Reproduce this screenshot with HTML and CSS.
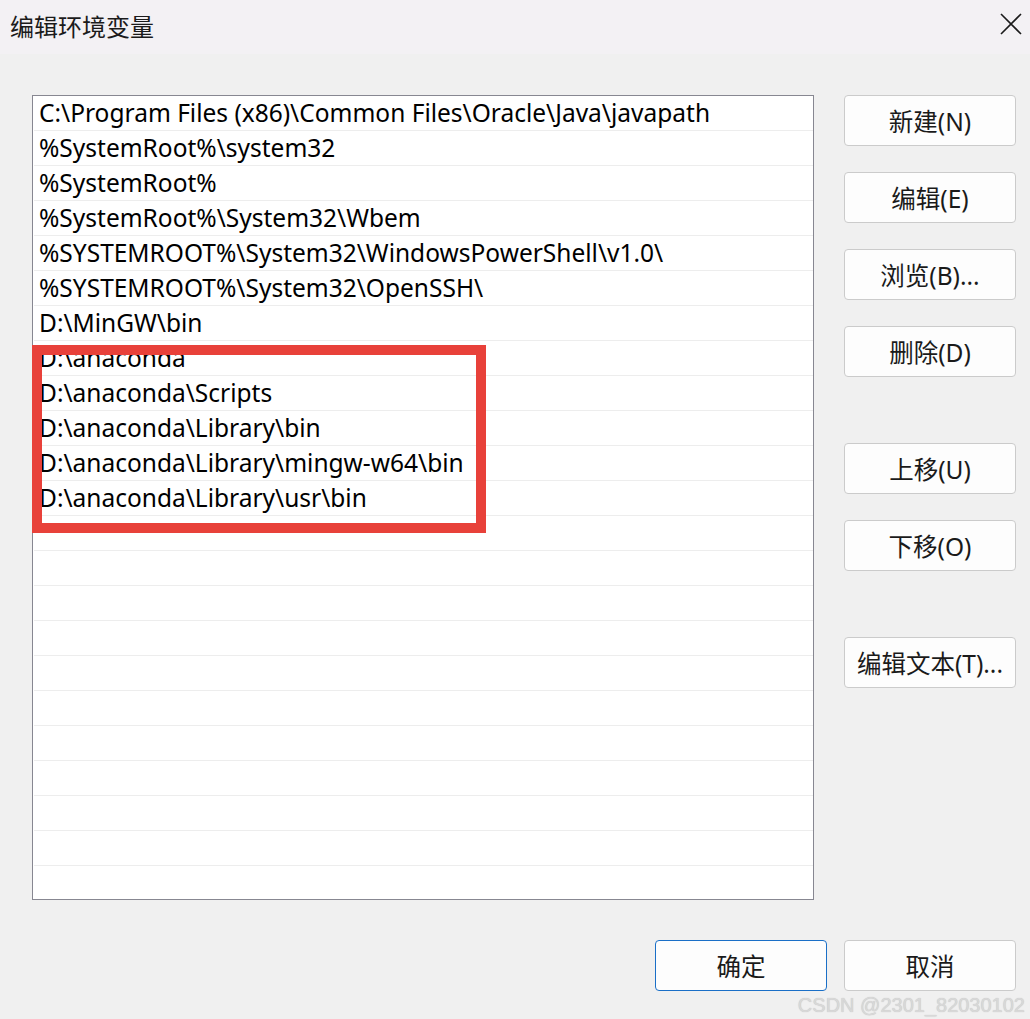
FILE: index.html
```html
<!DOCTYPE html>
<html lang="zh-CN">
<head>
    <meta charset="UTF-8">
    <title>编辑环境变量</title>
    <link rel="stylesheet" href="styles.css">
</head>
<body>
    <div class="window">
        <div class="title-bar">
            <span class="title">编辑环境变量</span>
            <svg class="close" width="22" height="22" viewBox="0 0 22 22">
                <path d="M1 1 L21 21 M21 1 L1 21" stroke="#1a1a1a" stroke-width="1.6" fill="none"/>
            </svg>
        </div>

        <div class="content">
            <div class="main-row">
                <div class="path-list">
                    <div class="row">C:\Program Files (x86)\Common Files\Oracle\Java\javapath</div>
                    <div class="row">%SystemRoot%\system32</div>
                    <div class="row">%SystemRoot%</div>
                    <div class="row">%SystemRoot%\System32\Wbem</div>
                    <div class="row">%SYSTEMROOT%\System32\WindowsPowerShell\v1.0\</div>
                    <div class="row">%SYSTEMROOT%\System32\OpenSSH\</div>
                    <div class="row">D:\MinGW\bin</div>
                    <div class="row">D:\anaconda</div>
                    <div class="row">D:\anaconda\Scripts</div>
                    <div class="row">D:\anaconda\Library\bin</div>
                    <div class="row">D:\anaconda\Library\mingw-w64\bin</div>
                    <div class="row">D:\anaconda\Library\usr\bin</div>
                    <div class="row"></div>
                    <div class="row"></div>
                    <div class="row"></div>
                    <div class="row"></div>
                    <div class="row"></div>
                    <div class="row"></div>
                    <div class="row"></div>
                    <div class="row"></div>
                    <div class="row"></div>
                    <div class="row"></div>
                    <div class="row last"></div>
                    <div class="highlight"></div>
                </div>

                <div class="side-buttons">
                    <button class="btn">新建(N)</button>
                    <button class="btn">编辑(E)</button>
                    <button class="btn">浏览(B)...</button>
                    <button class="btn">删除(D)</button>
                    <button class="btn group-start">上移(U)</button>
                    <button class="btn">下移(O)</button>
                    <button class="btn group-start">编辑文本(T)...</button>
                </div>
            </div>

            <div class="footer">
                <button class="btn primary">确定</button>
                <button class="btn">取消</button>
            </div>
        </div>

        <span class="watermark">CSDN @2301_82030102</span>
    </div>
</body>
</html>
```

FILE: styles.css
```css
body {
    margin: 0;
    background-color: #f0f0f0;
    font-family: "Noto Sans", "Noto Sans CJK SC", sans-serif;
    color: #000;
}

.window {
    position: relative;
    width: 1030px;
    height: 1019px;
    overflow: hidden;
}

.title-bar {
    height: 54px;
    background-color: #f3f1f4;
    display: flex;
    align-items: center;
    justify-content: space-between;
    padding: 0 8px 0 10px;
    box-sizing: border-box;
}

.title {
    font-family: "Noto Sans CJK SC", sans-serif;
    font-size: 24px;
    color: #1b1b1b;
    margin-top: -3px;
}

.close {
    margin-top: -6px;
}

.content {
    padding: 41px 14px 0 32px;
}

.main-row {
    display: flex;
    gap: 30px;
}

.path-list {
    position: relative;
    width: 781px;
    height: 803px;
    background-color: #fff;
    border: 1px solid #878791;
}

.path-list .row {
    height: 34px;
    border-bottom: 1px solid #ededed;
    margin-left: 1px;
    padding-left: 5px;
    font-size: 24.5px;
    line-height: 34px;
    white-space: nowrap;
}

.path-list .row.last {
    border-bottom: none;
}

/* red frame drawn over the anaconda entries */
.highlight {
    position: absolute;
    left: -1px;
    top: 249px;
    width: 434px;
    height: 168px;
    border: 10px solid #e8413a;
}

.side-buttons {
    display: flex;
    flex-direction: column;
    gap: 26px;
}

.btn {
    width: 172px;
    height: 51px;
    background-color: #fdfdfd;
    border: 1px solid #cbcbcb;
    border-radius: 4px;
    font-family: "Noto Sans", "Noto Sans CJK SC", sans-serif;
    font-size: 24.5px;
    color: #1a1a1a;
    padding: 0;
}

.side-buttons .group-start {
    margin-top: 40px;
}

.footer {
    display: flex;
    justify-content: flex-end;
    gap: 17px;
    margin-top: 40px;
}

.btn.primary {
    border-color: #1a6fc7;
}

.watermark {
    position: absolute;
    right: 5px;
    bottom: 2px;
    font-family: "Liberation Sans", sans-serif;
    font-size: 20px;
    color: #d8d8d8;
    text-shadow: 0 0 1px #bdbdbd;
}
```
